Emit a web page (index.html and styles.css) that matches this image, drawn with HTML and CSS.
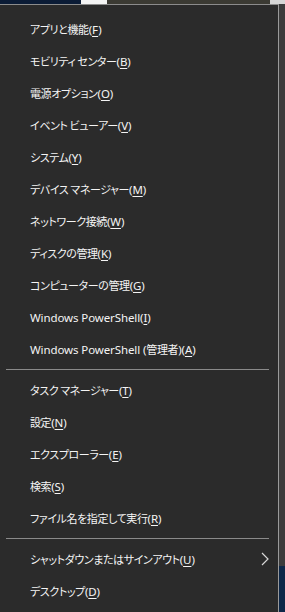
FILE: index.html
```html
<!DOCTYPE html>
<html lang="ja">

<head>
    <meta charset="UTF-8">
    <meta name="viewport" content="width=device-width, initial-scale=1.0">
    <title>クイック リンク メニュー</title>

    <link rel="stylesheet" href="styles.css">
</head>

<body>

    <div class="wallpaper">
        <div class="wp-navy"></div>
        <div class="wp-white"></div>
        <div class="wp-photo"></div>
        <div class="wp-light"></div>
    </div>

    <div class="menu">
        <div class="item">アプリと機能<span class="lat">(<u>F</u>)</span></div>
        <div class="item">モビリティ センター<span class="lat">(<u>B</u>)</span></div>
        <div class="item">電源オプション<span class="lat">(<u>O</u>)</span></div>
        <div class="item">イベント ビューアー<span class="lat">(<u>V</u>)</span></div>
        <div class="item">システム<span class="lat">(<u>Y</u>)</span></div>
        <div class="item">デバイス マネージャー<span class="lat">(<u>M</u>)</span></div>
        <div class="item">ネットワーク接続<span class="lat">(<u>W</u>)</span></div>
        <div class="item">ディスクの管理<span class="lat">(<u>K</u>)</span></div>
        <div class="item">コンピューターの管理<span class="lat">(<u>G</u>)</span></div>
        <div class="item"><span class="lat">Windows PowerShell(<u>I</u>)</span></div>
        <div class="item"><span class="lat">Windows PowerShell (</span>管理者<span class="lat">)(<u>A</u>)</span></div>
        <div class="sep"></div>
        <div class="item">タスク マネージャー<span class="lat">(<u>T</u>)</span></div>
        <div class="item">設定<span class="lat">(<u>N</u>)</span></div>
        <div class="item">エクスプローラー<span class="lat">(<u>E</u>)</span></div>
        <div class="item">検索<span class="lat">(<u>S</u>)</span></div>
        <div class="item">ファイル名を指定して実行<span class="lat">(<u>R</u>)</span></div>
        <div class="sep"></div>
        <div class="item has-sub">
            <span>シャットダウンまたはサインアウト<span class="lat">(<u>U</u>)</span></span>
            <svg class="chevron" width="8" height="14" viewBox="0 0 8 14">
                <path d="M1 1 L7 7 L1 13" fill="none" stroke="#d8d8d8" stroke-width="1.2" />
            </svg>
        </div>
        <div class="item">デスクトップ<span class="lat">(<u>D</u>)</span></div>
    </div>

</body>

</html>
```

FILE: styles.css
```css
html,
body {
    margin: 0;
    height: 612px;
    overflow: hidden;
}

body {
    background: linear-gradient(to bottom, #3c3c3c 0, #3c3c3c 566px, #0d2748 566px);
    font-family: "Noto Sans CJK JP", "Noto Sans", sans-serif;
}

.wallpaper {
    display: flex;
    height: 4px;
}

.wp-navy {
    width: 81px;
    background: #0b1c36;
}

.wp-white {
    width: 26px;
    background: #f4f4f4;
}

.wp-photo {
    width: 163px;
    background: #3b3a33;
}

.wp-light {
    flex: 1;
    background: #d6d6d6;
}

.menu {
    width: 279px;
    height: 608px;
    box-sizing: border-box;
    background: #2b2b2b;
    border-top: 1px solid #8c8c8c;
    border-right: 1px solid #9a9a9a;
    padding-top: 8px;
}

.item {
    height: 32px;
    display: flex;
    align-items: center;
    padding-left: 30px;
    padding-right: 9px;
    color: #f4f4f4;
    font-size: 11px;
    font-feature-settings: "palt";
    letter-spacing: -0.4px;
    white-space: pre;
}

.lat {
    font-family: "Noto Sans", "Noto Sans CJK JP", sans-serif;
    font-size: 11.5px;
    letter-spacing: -0.1px;
}

.item u {
    text-underline-offset: 2px;
}

.has-sub {
    justify-content: space-between;
}

.sep {
    height: 1px;
    margin: 4px 9px 4px 6px;
    background: #8a8a8a;
}
```
